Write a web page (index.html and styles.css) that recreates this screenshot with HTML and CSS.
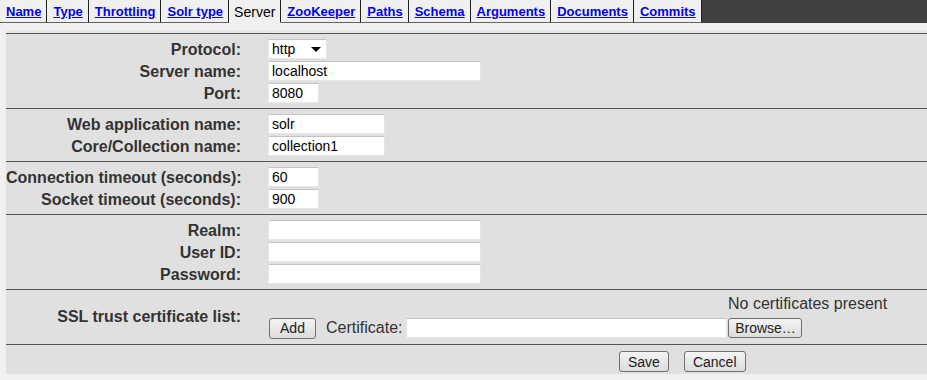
FILE: index.html
```html
<!DOCTYPE html>
<html lang="en">
<head>
  <meta charset="UTF-8" />
  <title>Server</title>
  <link rel="stylesheet" href="styles.css">
</head>
<body>
  <div class="tabs">
    <a class="tab" href="#">Name</a>
    <a class="tab" href="#">Type</a>
    <a class="tab" href="#">Throttling</a>
    <a class="tab" href="#">Solr type</a>
    <span class="tab selected">Server</span>
    <a class="tab" href="#">ZooKeeper</a>
    <a class="tab" href="#">Paths</a>
    <a class="tab" href="#">Schema</a>
    <a class="tab" href="#">Arguments</a>
    <a class="tab" href="#">Documents</a>
    <a class="tab" href="#">Commits</a>
  </div>

  <div class="panel">
    <div class="section">
      <label class="label">Protocol:</label>
      <div class="select">
        <select>
          <option>http</option>
          <option>https</option>
        </select>
      </div>
      <label class="label">Server name:</label>
      <div><input class="field wide" type="text" value="localhost"></div>
      <label class="label">Port:</label>
      <div><input class="field short" type="text" value="8080"></div>
    </div>

    <div class="section">
      <label class="label">Web application name:</label>
      <div><input class="field medium" type="text" value="solr"></div>
      <label class="label">Core/Collection name:</label>
      <div><input class="field medium" type="text" value="collection1"></div>
    </div>

    <div class="section">
      <label class="label">Connection timeout (seconds):</label>
      <div><input class="field short" type="text" value="60"></div>
      <label class="label">Socket timeout (seconds):</label>
      <div><input class="field short" type="text" value="900"></div>
    </div>

    <div class="section">
      <label class="label">Realm:</label>
      <div><input class="field wide" type="text"></div>
      <label class="label">User ID:</label>
      <div><input class="field wide" type="text"></div>
      <label class="label">Password:</label>
      <div><input class="field wide" type="password"></div>
    </div>

    <div class="section ssl">
      <label class="label">SSL trust certificate list:</label>
      <div class="cert-box">
        <div class="cert-empty">No certificates present</div>
        <div class="cert-row">
          <button class="btn">Add</button>
          <span class="cert-label">Certificate:</span>
          <input class="field cert" type="text">
          <button class="btn browse">Browse…</button>
        </div>
      </div>
    </div>

    <div class="actions">
      <button class="btn">Save</button>
      <button class="btn">Cancel</button>
    </div>
  </div>
</body>
</html>
```

FILE: styles.css
```css
body {
  margin: 0;
  background: #f0f0f0;
  font-family: 'Liberation Sans', Arial, sans-serif;
  color: #333;
}

.tabs {
  display: flex;
  background: #404040;
  height: 23px;
}

.tab {
  display: block;
  height: 22px;
  line-height: 23px;
  padding: 0 5px 0 6px;
  background: #f0f0f0;
  border-right: 1px solid #222;
  border-bottom: 1px solid #666;
  font-size: 13px;
  font-weight: bold;
  color: #0000ee;
  text-decoration: underline;
}

.tab.selected {
  padding: 0 5px;
  color: #000;
  font-weight: normal;
  font-size: 14px;
  text-decoration: none;
  line-height: 25px;
  border-bottom-color: #f0f0f0;
}

.panel {
  margin: 7px 0 0 6px;
  background: #e0e0e0;
  border-top: 3px solid #e8e8e8;
}

.section {
  display: grid;
  grid-template-columns: 235px 1fr;
  column-gap: 27px;
  grid-auto-rows: 22px;
  align-items: center;
  padding: 4px 0;
  border-top: 1px solid #555;
}

.label {
  text-align: right;
  white-space: nowrap;
  font-size: 16px;
  font-weight: bold;
  color: #333;
  padding-top: 1px;
}

.field {
  display: block;
  box-sizing: border-box;
  height: 20px;
  margin: 0;
  padding: 0 3px;
  background: #fff;
  border: 1px solid #e6e6e6;
  border-top-color: #c4c4c4;
  font-family: 'Liberation Sans', Arial, sans-serif;
  font-size: 14px;
  color: #000;
  outline: none;
}

.wide { width: 213px; }
.medium { width: 117px; }
.short { width: 51px; }
.cert { width: 321px; }

.select {
  position: relative;
  width: 59px;
  height: 20px;
}

.select select {
  appearance: none;
  width: 100%;
  height: 20px;
  margin: 0;
  padding: 0 3px;
  background: #fff;
  border: 1px solid #e6e6e6;
  border-top-color: #c4c4c4;
  border-radius: 0;
  font-family: 'Liberation Sans', Arial, sans-serif;
  font-size: 14px;
  color: #000;
}

.select::after {
  content: "";
  position: absolute;
  right: 6px;
  top: 8px;
  border-left: 5px solid transparent;
  border-right: 5px solid transparent;
  border-top: 5px solid #000;
  pointer-events: none;
}

.ssl {
  grid-auto-rows: auto;
  padding: 4px 0 5px;
}

.cert-box {
  display: flex;
  flex-direction: column;
}

.cert-empty {
  margin-left: 460px;
  height: 20px;
  line-height: 20px;
  font-size: 16px;
  color: #333;
  white-space: nowrap;
}

.cert-row {
  display: flex;
  align-items: center;
  margin-top: 3px;
  height: 22px;
}

.cert-row .btn {
  margin-left: 1px;
}

.cert-label {
  margin: 0 4px 0 10px;
  font-size: 16px;
  color: #333;
}

.btn {
  box-sizing: border-box;
  min-width: 47px;
  height: 21px;
  padding: 0 8px;
  background: linear-gradient(#f4f4f4, #dcdcdc);
  border: 1px solid #707070;
  border-radius: 3px;
  font-family: 'Liberation Sans', Arial, sans-serif;
  font-size: 14px;
  color: #222;
  cursor: pointer;
}

.cert-row .browse {
  width: 74px;
  height: 20px;
  padding: 0;
  margin-left: 1px;
}

.actions {
  display: flex;
  gap: 15px;
  padding: 6px 0 2px 613px;
  border-top: 1px solid #555;
}
```
